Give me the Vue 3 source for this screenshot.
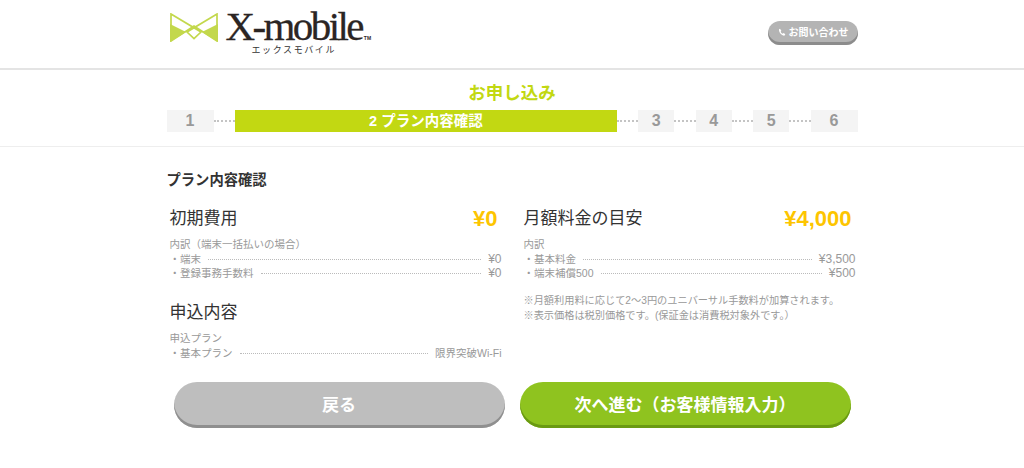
<script setup>
const steps = [
  { label: "1", wide: true },
  { label: "2 プラン内容確認", active: true },
  { label: "3" },
  { label: "4" },
  { label: "5" },
  { label: "6", wide: true }
];

const initialRows = [
  { name: "端末", value: "¥0", yen: true },
  { name: "登録事務手数料", value: "¥0", yen: true }
];
const planRows = [{ name: "基本プラン", value: "限界突破Wi-Fi" }];
const monthlyRows = [
  { name: "基本料金", value: "¥3,500", yen: true },
  { name: "端末補償500", value: "¥500", yen: true }
];
</script>

<template>
  <div class="page">
    <!--header-->
    <header class="header">
      <div class="header-inner">
        <div class="logo">
          <svg class="logo-mark" width="48" height="29" viewBox="0 0 48 29">
            <path d="M0 11 L16 19 L0 29 Z" fill="#c3d84c" />
            <path d="M48 11 L32 19 L48 29 Z" fill="#c3d84c" />
            <path d="M1 1 L31 19 L24 25.5 L17 19 L47 1 V28 L24 13 L1 28 Z" fill="none" stroke="#c3d84c" stroke-width="1.7" stroke-linejoin="miter" />
          </svg>
          <div class="logo-text">
            <div class="logo-name">X-mobile<span class="logo-tm">TM</span></div>
            <div class="logo-kana">エックスモバイル</div>
          </div>
        </div>
        <button class="contact">
          <svg width="8" height="8" viewBox="0 0 24 24">
            <path d="M6 2 L10 8 L8 11 C9 14 11 16 14 17 L17 15 L22 19 L19 23 C10 23 2 13 3 4 Z" fill="#fff" />
          </svg>
          お問い合わせ
        </button>
      </div>
    </header>

    <!--steps-->
    <section class="progress">
      <h1 class="progress-title">お申し込み</h1>
      <div class="steps">
        <template v-for="(step, i) in steps" :key="step.label">
          <span v-if="i > 0" class="dots"></span>
          <div class="step" :class="{ wide: step.wide, active: step.active }">{{ step.label }}</div>
        </template>
      </div>
    </section>

    <!--content-->
    <main class="content">
      <h2 class="content-title">プラン内容確認</h2>
      <div class="columns">
        <div class="col">
          <div class="price-head">
            <h3>初期費用</h3>
            <span class="price">¥0</span>
          </div>
          <p class="sub">内訳（端末一括払いの場合）</p>
          <div v-for="row in initialRows" :key="row.name" class="row">
            <span>・{{ row.name }}</span><i></i><span :class="{ yen: row.yen }">{{ row.value }}</span>
          </div>
          <h3 class="plan-head">申込内容</h3>
          <p class="sub">申込プラン</p>
          <div v-for="row in planRows" :key="row.name" class="row">
            <span>・{{ row.name }}</span><i></i><span :class="{ yen: row.yen }">{{ row.value }}</span>
          </div>
        </div>
        <div class="col">
          <div class="price-head">
            <h3>月額料金の目安</h3>
            <span class="price">¥4,000</span>
          </div>
          <p class="sub">内訳</p>
          <div v-for="row in monthlyRows" :key="row.name" class="row">
            <span>・{{ row.name }}</span><i></i><span :class="{ yen: row.yen }">{{ row.value }}</span>
          </div>
          <p class="note">※月額利用料に応じて2〜3円のユニバーサル手数料が加算されます。<br />※表示価格は税別価格です。(保証金は消費税対象外です。）</p>
        </div>
      </div>
      <div class="buttons">
        <button class="btn back">戻る</button>
        <button class="btn next">次へ進む（お客様情報入力）</button>
      </div>
    </main>
  </div>
</template>

<style>
html, body {
  margin: 0;
  background: #fff;
}
</style>

<style scoped>
.page {
  width: 1024px;
  height: 468px;
  overflow: hidden;
  font-family: "Liberation Sans", "Noto Sans CJK JP", sans-serif;
  color: #333;
}

.header {
  height: 68px;
  border-bottom: 2px solid #e4e4e4;
}

.header-inner {
  width: 691px;
  margin: 0 auto;
  height: 68px;
  display: flex;
  justify-content: space-between;
}

.logo {
  display: flex;
  align-items: flex-start;
  padding: 13px 0 0 3px;
}

.logo-mark {
  display: block;
}

.logo-text {
  margin-left: 8px;
  margin-top: -6px;
}

.logo-name {
  font-family: "Liberation Serif", serif;
  font-size: 41px;
  line-height: 38px;
  letter-spacing: -2.6px;
  color: #2b2523;
  -webkit-text-stroke: 0.3px #2b2523;
  white-space: nowrap;
}

.logo-tm {
  font-family: "Liberation Sans", sans-serif;
  font-size: 5px;
  line-height: 0;
  font-weight: 700;
  letter-spacing: 0;
  -webkit-text-stroke: 0;
  margin-left: 2px;
}

.logo-kana {
  font-size: 9px;
  line-height: 10px;
  letter-spacing: 1.6px;
  margin-left: 26px;
  color: #333;
  white-space: nowrap;
}

.contact {
  width: 90px;
  height: 24px;
  margin-top: 21px;
  border: none;
  padding: 0 0 3px 1px;
  border-radius: 12px;
  background: #b4b4b4;
  box-shadow: inset 0 -3px 0 #8c8c8c;
  color: #fff;
  font-family: inherit;
  font-size: 10px;
  font-weight: 700;
  display: flex;
  align-items: center;
  justify-content: center;
  gap: 3px;
}

.progress {
  height: 76px;
  border-bottom: 1px solid #eeeeee;
}

.progress-title {
  margin: 0;
  padding-top: 13px;
  height: 27px;
  font-size: 17.5px;
  line-height: 20px;
  font-weight: 700;
  text-align: center;
  color: #c2d812;
}

.steps {
  width: 691px;
  margin: 0 auto;
  display: flex;
  align-items: center;
}

.step {
  width: 36px;
  height: 22px;
  flex: none;
  background: #f4f4f4;
  color: #999;
  font-size: 16px;
  font-weight: 700;
  line-height: 22px;
  text-align: center;
}

.step.wide {
  width: 47px;
}

.step.active {
  width: 382px;
  background: #c2d812;
  color: #fff;
  font-size: 14.5px;
}

.dots {
  flex: 1;
  border-top: 2px dotted #c4c4c4;
}

.content {
  width: 691px;
  margin: 0 auto;
}

.content-title {
  margin: 0;
  padding-top: 24px;
  font-size: 14.3px;
  line-height: 18px;
  font-weight: 700;
  color: #333;
}

.columns {
  display: grid;
  grid-template-columns: 332px 332px;
  column-gap: 22px;
  padding-left: 3px;
  margin-top: 18px;
  height: 175px;
}

.price-head {
  display: flex;
  justify-content: space-between;
  align-items: center;
  height: 24px;
  padding-right: 4px;
}

h3 {
  margin: 0;
  font-size: 17px;
  line-height: 24px;
  font-weight: 400;
  color: #333;
}

.price {
  font-size: 22px;
  font-weight: 700;
  color: #fdc500;
}

.sub {
  margin: 4px 0 0;
  font-size: 10.5px;
  line-height: 18px;
  color: #999;
}

.row {
  display: flex;
  align-items: center;
  font-size: 10.5px;
  line-height: 13.5px;
  color: #999;
}

.row i {
  flex: 1;
  margin: 0 7px;
  border-top: 1px dotted #bbb;
}

.yen {
  font-size: 12px;
}

.plan-head {
  margin-top: 21px;
}

.note {
  margin: 13px 0 0;
  font-size: 10.2px;
  line-height: 15px;
  color: #999;
  white-space: nowrap;
}

.buttons {
  display: flex;
  gap: 15px;
  padding-left: 7px;
}

.btn {
  width: 331px;
  height: 46px;
  border: none;
  padding: 0 0 3px;
  border-radius: 23px;
  color: #fff;
  font-family: inherit;
  font-size: 17px;
  font-weight: 700;
}

.back {
  background: #bebebe;
  box-shadow: inset 0 -3px 0 #8f8f8f;
}

.next {
  background: #8fc31f;
  box-shadow: inset 0 -3px 0 #6a9a12;
}
</style>
